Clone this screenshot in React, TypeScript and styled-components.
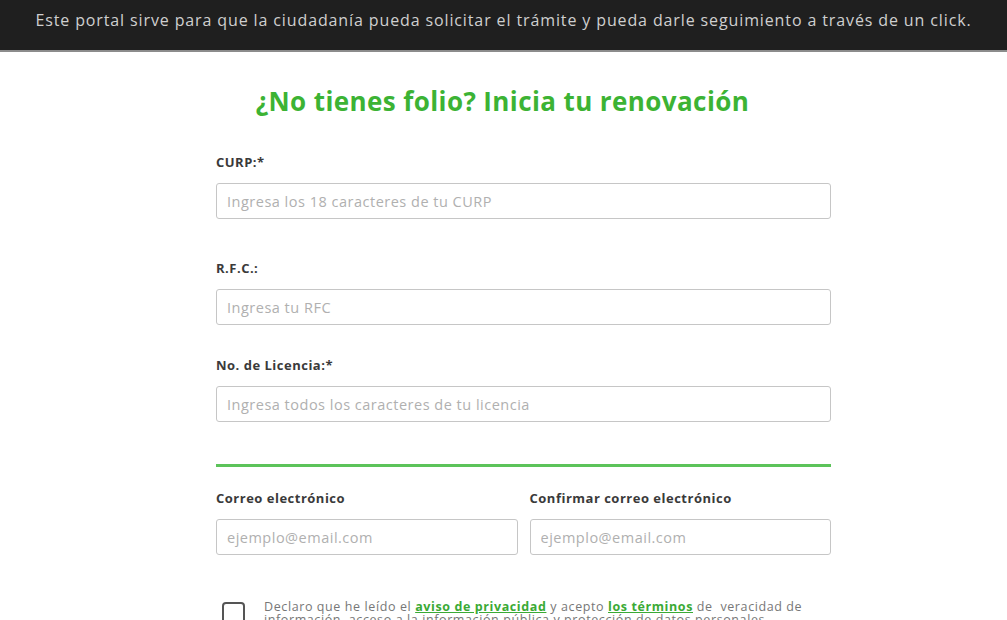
import React from 'react';
import styled, { createGlobalStyle } from 'styled-components';

const GlobalStyle = createGlobalStyle`
  body {
    margin: 0;
    background: #ffffff;
    font-family: "Open Sans", "Liberation Sans", sans-serif;
  }
  * { box-sizing: border-box; }
`;

const TopBar = styled.header`
  height: 52px;
  background: #1f1f1f;
  border-bottom: 2px solid #8c8c8c;
  display: flex;
  align-items: flex-start;
  justify-content: center;
  padding-top: 11px;
  color: #cfcfcf;
  font-size: 16px;
  line-height: 18px;
  letter-spacing: 0.88px;
`;

const Title = styled.h1`
  margin: 33px 0 0;
  text-align: center;
  color: #3cb334;
  font-size: 26px;
  line-height: 32px;
  font-weight: 700;
  letter-spacing: 0.4px;
  padding-right: 2px;
`;

const Form = styled.form`
  width: 615px;
  margin: 0 0 0 216px;
  display: flex;
  flex-direction: column;
`;

const Field = styled.div<{ $top: number }>`
  display: flex;
  flex-direction: column;
  margin-top: ${(p) => p.$top}px;
  min-width: 0;
  flex: 1;
`;

const Label = styled.label`
  color: #3a3a3a;
  font-size: 13px;
  line-height: 16px;
  font-weight: 700;
  letter-spacing: 0.5px;
  margin-bottom: 13px;
`;

const Input = styled.input`
  height: 36px;
  width: 100%;
  border: 1px solid #c6c6c6;
  border-radius: 3px;
  padding: 0 10px;
  font-family: inherit;
  font-size: 14.5px;
  letter-spacing: 0.5px;
  color: #333;
  background: #fff;
  outline: none;
  &::placeholder {
    color: #b0b0b0;
  }
`;

const Divider = styled.hr`
  margin: 42px 0 0;
  border: none;
  height: 3px;
  background: #5cc35a;
`;

const Row = styled.div`
  display: flex;
  gap: 12px;
`;

const Consent = styled.div`
  display: flex;
  align-items: flex-start;
  gap: 19px;
  margin-top: 46px;
  padding-left: 6px;
`;

const Box = styled.span`
  flex: none;
  width: 23px;
  height: 23px;
  margin-top: 1px;
  border: 2px solid #555;
  border-radius: 4px;
`;

const ConsentText = styled.p`
  margin: 0;
  width: 555px;
  color: #777;
  font-size: 12.5px;
  line-height: 12.5px;
  letter-spacing: 0.6px;
`;

const Link = styled.a`
  color: #3aaa35;
  font-weight: 700;
  text-decoration: underline;
`;

export default function App() {
  return (
    <>
      <GlobalStyle />
      <TopBar>
        Este portal sirve para que la ciudadanía pueda solicitar el trámite y pueda darle seguimiento a través de un click.
      </TopBar>
      <Title>¿No tienes folio? Inicia tu renovación</Title>
      <Form>
        <Field $top={37}>
          <Label>CURP:*</Label>
          <Input placeholder="Ingresa los 18 caracteres de tu CURP" />
        </Field>
        <Field $top={41}>
          <Label>R.F.C.:</Label>
          <Input placeholder="Ingresa tu RFC" />
        </Field>
        <Field $top={32}>
          <Label>No. de Licencia:*</Label>
          <Input placeholder="Ingresa todos los caracteres de tu licencia" />
        </Field>
        <Divider />
        <Row>
          <Field $top={23}>
            <Label>Correo electrónico</Label>
            <Input placeholder="ejemplo@email.com" />
          </Field>
          <Field $top={23}>
            <Label>Confirmar correo electrónico</Label>
            <Input placeholder="ejemplo@email.com" />
          </Field>
        </Row>
        <Consent>
          <Box />
          <ConsentText>
            Declaro que he leído el <Link>aviso de privacidad</Link> y acepto <Link>los términos</Link> de&nbsp; veracidad de
            información, acceso a la información pública y protección de datos personales.
          </ConsentText>
        </Consent>
      </Form>
    </>
  );
}
